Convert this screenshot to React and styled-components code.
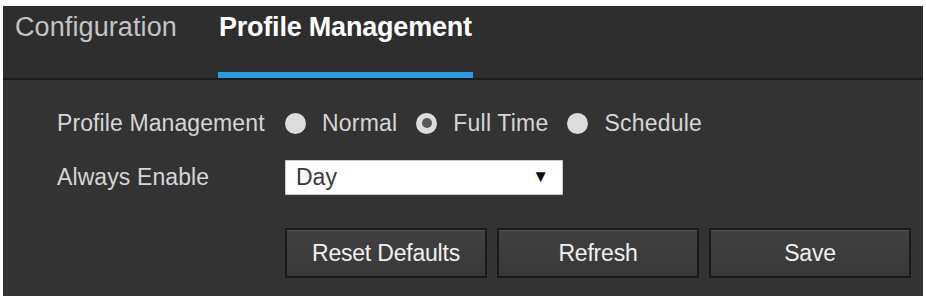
import React from 'react'
import styled, { createGlobalStyle } from 'styled-components'

const GlobalStyle = createGlobalStyle`
  html, body {
    margin: 0;
    padding: 0;
    background: #ffffff;
  }
  body {
    font-family: "Liberation Sans", Arial, sans-serif;
  }
`

const Panel = styled.div`
  margin: 6px 3px 0 3px;
  width: 920px;
  height: 290px;
  background: #333333;
  display: flex;
  flex-direction: column;
`

const TabBar = styled.div`
  display: flex;
  align-items: stretch;
  gap: 40px;
  height: 72px;
  padding-left: 11px;
  background: #2e2e2e;
  border-bottom: 2px solid #1c1c1c;
`

const Tab = styled.div`
  padding: 6px 1px 0 1px;
  font-size: 27px;
  letter-spacing: ${p => (p.$active ? '-0.2px' : '0.1px')};
  font-weight: ${p => (p.$active ? 700 : 400)};
  color: ${p => (p.$active ? '#ffffff' : '#c4c4c4')};
  border-bottom: 6px solid ${p => (p.$active ? '#2b9be0' : 'transparent')};
  box-sizing: border-box;
`

const Body = styled.div`
  display: flex;
  flex-direction: column;
  padding: 16px 0 0 54px;
`

const Row = styled.div`
  display: grid;
  grid-template-columns: 228px auto;
  align-items: center;
  height: 54px;
`

const Label = styled.div`
  font-size: 23px;
  letter-spacing: 0.1px;
  color: #d6d6d6;
`

const RadioGroup = styled.div`
  display: flex;
  align-items: center;
`

const RadioOption = styled.label`
  display: flex;
  align-items: center;
  gap: 16px;
  margin-right: 19px;
  font-size: 23px;
  letter-spacing: 0.2px;
  color: #d6d6d6;
`

const RadioDot = styled.span`
  width: 21px;
  height: 21px;
  border-radius: 50%;
  background: #dcdcdc;
  display: flex;
  align-items: center;
  justify-content: center;

  &::after {
    content: '';
    width: 10px;
    height: 10px;
    border-radius: 50%;
    background: ${p => (p.$checked ? '#585858' : 'transparent')};
  }
`

const Select = styled.div`
  width: 278px;
  height: 35px;
  box-sizing: border-box;
  background: #ffffff;
  border: 1px solid #c8c8c8;
  display: flex;
  align-items: center;
  justify-content: space-between;
  padding: 0 13px 0 10px;
  font-size: 23px;
  color: #3a3a3a;
`

const Arrow = styled.span`
  font-size: 17px;
  color: #111111;
`

const ButtonRow = styled.div`
  display: flex;
  gap: 10px;
  margin-left: 228px;
  margin-top: 24px;
`

const Button = styled.button`
  width: 202px;
  height: 50px;
  box-sizing: border-box;
  background: linear-gradient(#414141, #383838);
  border: 2px solid #1a1a1a;
  box-shadow: inset 0 1px 0 #555555;
  color: #f0f0f0;
  font-family: "Liberation Sans", Arial, sans-serif;
  font-size: 23px;
  letter-spacing: -0.2px;
  padding: 0;
`

const App = () => {
  return (
    <>
      <GlobalStyle />
      <Panel>
        <TabBar>
          <Tab>Configuration</Tab>
          <Tab $active>Profile Management</Tab>
        </TabBar>
        <Body>
          <Row>
            <Label>Profile Management</Label>
            <RadioGroup>
              <RadioOption><RadioDot />Normal</RadioOption>
              <RadioOption><RadioDot $checked />Full Time</RadioOption>
              <RadioOption><RadioDot />Schedule</RadioOption>
            </RadioGroup>
          </Row>
          <Row>
            <Label>Always Enable</Label>
            <Select>
              <span>Day</span>
              <Arrow>▼</Arrow>
            </Select>
          </Row>
          <ButtonRow>
            <Button>Reset Defaults</Button>
            <Button>Refresh</Button>
            <Button>Save</Button>
          </ButtonRow>
        </Body>
      </Panel>
    </>
  )
}

export default App
